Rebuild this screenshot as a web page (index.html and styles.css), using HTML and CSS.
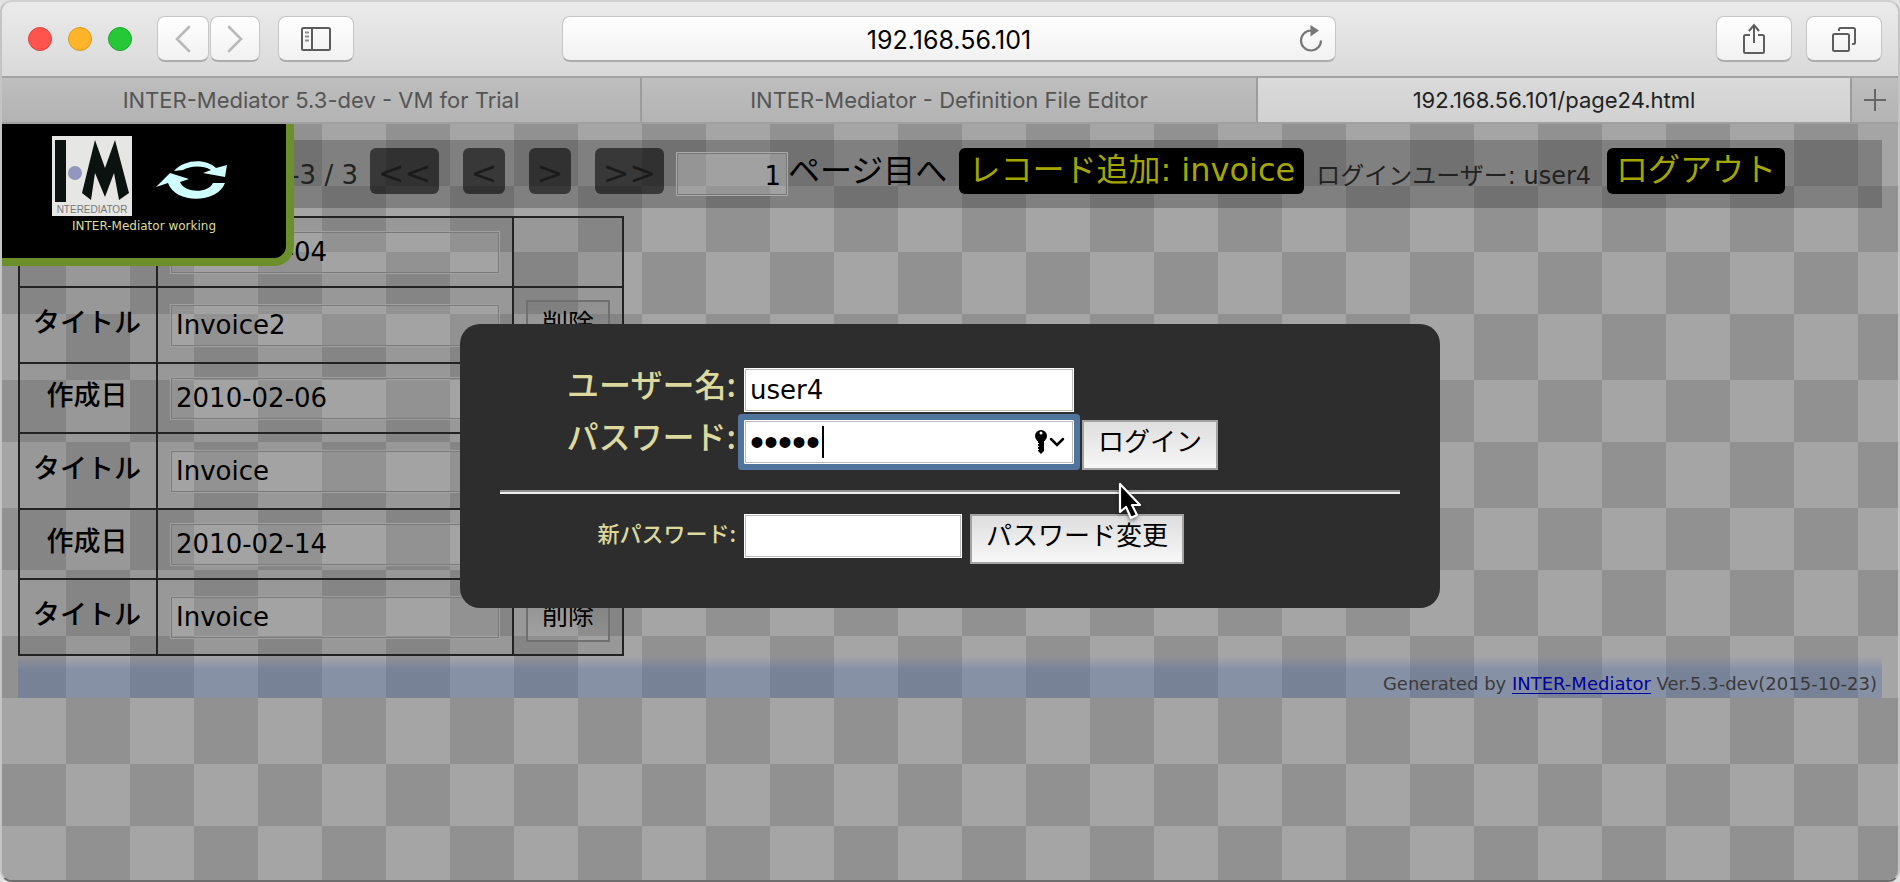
FILE: index.html
```html
<!DOCTYPE html>
<html lang="ja">
<head>
<meta charset="utf-8">
<title>192.168.56.101/page24.html</title>
<link rel="stylesheet" href="styles.css">
</head>
<body>
<div class="window">
  <header class="toolbar">
    <div class="lights"><i class="light red"></i><i class="light yellow"></i><i class="light green"></i></div>
    <div class="history">
      <button class="tool back" aria-label="Back"><svg width="16" height="30" viewBox="0 0 16 30"><path d="M14 3 2 15l12 12" fill="none" stroke="#b9b9b9" stroke-width="2.6" stroke-linecap="round"/></svg></button>
      <button class="tool forward" aria-label="Forward"><svg width="16" height="30" viewBox="0 0 16 30"><path d="M2 3l12 12L2 27" fill="none" stroke="#b9b9b9" stroke-width="2.6" stroke-linecap="round"/></svg></button>
    </div>
    <button class="tool wide" aria-label="Sidebar"><svg width="30" height="24" viewBox="0 0 30 24"><rect x="1" y="1" width="28" height="22" rx="1.5" fill="none" stroke="#5c5c5c" stroke-width="2"/><path d="M11 1v22" stroke="#5c5c5c" stroke-width="2"/><path d="M4 5.500h4M4 9.500h4M4 13.500h4" stroke="#8d8d8d" stroke-width="2"/></svg></button>
    <div class="address">
      <input class="address-input" type="text" value="192.168.56.101" aria-label="Address">
      <button class="reload" aria-label="Reload"><svg width="24" height="28" viewBox="0 0 24 28"><path d="M12 5.500A10 10 0 1 0 22 15.500" fill="none" stroke="#777" stroke-width="2.200"/><path d="M11.500 0 20 5.500l-8.500 6z" fill="#777"/></svg></button>
    </div>
    <div class="actions">
      <button class="tool wide" aria-label="Share"><svg width="24" height="32" viewBox="0 0 24 32"><path d="M8 12H3.500A1.500 1.500 0 0 0 2 13.500v15A1.500 1.500 0 0 0 3.500 30h17a1.500 1.500 0 0 0 1.500-1.500v-15a1.500 1.500 0 0 0-1.500-1.500H16M12 20V2M7 8l5-6 5 6" fill="none" stroke="#5e5e5e" stroke-width="2"/></svg></button>
      <button class="tool wide" aria-label="Show tabs"><svg width="26" height="26" viewBox="0 0 26 26"><rect x="2" y="8" width="16" height="17" rx="1.500" fill="none" stroke="#5e5e5e" stroke-width="2"/><path d="M8 5V3.500A1.500 1.500 0 0 1 9.500 2h13A1.500 1.500 0 0 1 24 3.500v13a1.500 1.500 0 0 1-1.500 1.500H21" fill="none" stroke="#5e5e5e" stroke-width="2"/></svg></button>
    </div>
  </header>
  <nav class="tabs">
    <button class="tab">INTER-Mediator 5.3-dev - VM for Trial</button>
    <button class="tab second">INTER-Mediator - Definition File Editor</button>
    <button class="tab third active">192.168.56.101/page24.html</button>
    <button class="new-tab" aria-label="New tab"><svg width="22" height="22" viewBox="0 0 22 22"><path d="M11 0v22M0 11h22" stroke="#666" stroke-width="2"/></svg></button>
  </nav>
  <main class="page">
    <div class="navigator">
      <span class="position">-3 / 3</span>
      <button class="nav-button double">&lt;&lt;</button>
      <button class="nav-button">&lt;</button>
      <button class="nav-button">&gt;</button>
      <button class="nav-button double">&gt;&gt;</button>
      <label class="jump"><input class="jump-input" type="text" value="1">ページ目へ</label>
      <button class="command">レコード追加: invoice</button>
      <span class="user">ログインユーザー: user4</span>
      <button class="command logout">ログアウト</button>
    </div>
    <table class="records">
      <tr class="short"><th></th><td><input class="field" type="text" value="2010-02-04" aria-label="作成日"></td><td></td></tr>
      <tr><th><label for="t1">タイトル</label></th><td><input class="field" id="t1" type="text" value="Invoice2"></td><td><button class="delete">削除</button></td></tr>
      <tr class="short"><th><label for="d2">作成日</label></th><td><input class="field" id="d2" type="text" value="2010-02-06"></td><td></td></tr>
      <tr><th><label for="t2">タイトル</label></th><td><input class="field" id="t2" type="text" value="Invoice"></td><td></td></tr>
      <tr class="short"><th><label for="d3">作成日</label></th><td><input class="field" id="d3" type="text" value="2010-02-14"></td><td></td></tr>
      <tr><th><label for="t3">タイトル</label></th><td><input class="field" id="t3" type="text" value="Invoice"></td><td><button class="delete">削除</button></td></tr>
    </table>
    <footer class="credit">Generated by <a href="#">INTER-Mediator</a> Ver.5.3-dev(2015-10-23)</footer>

    <aside class="working">
      <div class="working-icons">
        <svg width="80" height="80" viewBox="0 0 80 80"><rect width="80" height="80" fill="#e6e6e4"/><rect x="3" y="4" width="11" height="62" fill="#0b1210"/><circle cx="23" cy="37" r="7" fill="#9297c0"/><path d="M43 4 53 32 63 4 77 57 67 64 62 37 53 61 43 37 39 64 30 57z" fill="#0b1210"/><text x="40" y="77" text-anchor="middle" class="logo-text">NTEREDIATOR</text></svg>
        <svg width="72" height="40" viewBox="0 0 72 40"><g fill="#d0ffff"><path d="M18 11C28-1 50-2 60 8l11-3-2 12-22-4 8-3C46 5 34 6 27 10z"/><path d="M0 27 14 13l19 6-9 3c4 11 28 12 33 1h12C62 43 20 45 12 23z"/></g></svg>
      </div>
      <p class="working-text">INTER-Mediator working</p>
    </aside>

    <div class="backdrop">
      <form class="dialog">
        <div class="row">
          <label class="caption" for="user">ユーザー名:</label>
          <input class="entry" id="user" type="text" value="user4">
        </div>
        <div class="row">
          <label class="caption" for="password">パスワード:</label>
          <div class="password">
            <input class="entry focused" id="password" type="password" value="abcde">
            <span class="caret"></span>
            <svg class="key" width="32" height="26" viewBox="0 0 32 26"><circle cx="7" cy="7" r="6" fill="#000"/><circle cx="7" cy="4" r="1.500" fill="#fff"/><path d="M4 11h6v11l-3 3-3-3z" fill="#000"/><path d="M4 14.500h1M4 17.500h1M4 20.500h1" stroke="#fff"/><path d="m17 10 6 6 6-6" fill="none" stroke="#000" stroke-width="2.500" stroke-linecap="round"/></svg>
          </div>
          <button class="push" type="button">ログイン</button>
        </div>
        <hr class="rule">
        <div class="row">
          <label class="caption small" for="newpass">新パスワード:</label>
          <input class="entry narrow" id="newpass" type="password">
          <button class="push" type="button">パスワード変更</button>
        </div>
        <svg class="pointer" width="28" height="42" viewBox="0 0 28 42"><path d="M3 2v28l6-5 5 11 6-3-5-10h8z" fill="#000" stroke="#fff" stroke-width="2.200" stroke-linejoin="round"/></svg>
      </form>
    </div>
  </main>
</div>
</body>
</html>
```
FILE: styles.css
```css
* { box-sizing: border-box; }
body { margin: 0; background: #e2e2e2; font-family: "DejaVu Sans", "Noto Sans CJK JP", sans-serif; color: #000; }
button, input { font: inherit; color: inherit; margin: 0; border: 0; padding: 0; }
svg { display: block; flex: none; }

/* Browser window */
.window { display: flex; flex-direction: column; min-height: 100vh; border: 2px solid #c4c4c4; border-top-color: #d0d0d0; border-bottom-color: #6e6e6e; border-radius: 12px; overflow: hidden; }

.toolbar { display: flex; align-items: center; height: 76px; padding: 0 16px 0 26px; border-bottom: 2px solid #a3a3a3; background: linear-gradient(#ebebeb, #d9d9d9); font-family: Inter, "Liberation Sans", sans-serif; }
.lights { display: flex; gap: 16px; margin-right: 25px; }
.light { width: 24px; height: 24px; border-radius: 50%; border: 1px solid; }
.red { background: #ff544d; border-color: #e2443e; }
.yellow { background: #ffb429; border-color: #dd9a1c; }
.green { background: #26c838; border-color: #1aa82a; }
.tool, .address { height: 46px; border: 1px solid #c6c6c6; border-bottom: 2px solid #acacac; border-radius: 8px; background: linear-gradient(#fff, #f1f1f1); }
.tool { display: flex; align-items: center; justify-content: center; width: 76px; }
.history { display: flex; gap: 1px; margin-right: 18px; }
.history .back { width: 52px; }
.history .forward { width: 50px; }
.address { display: flex; align-items: center; position: relative; flex: 0 1 774px; margin: 0 auto 0 208px; }
.address-input { width: 100%; padding-top: 2px; background: none; text-align: center; font-size: 25px; line-height: 32px; }
.reload { position: absolute; right: 12px; background: none; }
.actions { display: flex; gap: 14px; }

.tabs { display: flex; height: 46px; border-bottom: 2px solid #a0a0a0; background: linear-gradient(#bebebe, #b3b3b3); font-family: Inter, "Liberation Sans", sans-serif; font-size: 22px; }
.tab { flex: 640 1 0; min-width: 0; border-right: 2px solid #9c9c9c; background: none; color: #555; white-space: nowrap; }
.second { flex-grow: 616; }
.third { flex-grow: 594; }
.active { background: linear-gradient(#dadada, #d1d1d1); color: #222; }
.new-tab { display: flex; align-items: center; justify-content: center; width: 46px; background: none; }

/* Checkered page: column stripes, and the inverse stripes on every other row */
.page { position: relative; flex: 1; padding: 16px; font-size: 26px; background: repeating-linear-gradient(90deg, #919191 0 64px, #a5a5a5 64px 128px); }
.page::before {
  content: ""; position: absolute; inset: 0;
  background: repeating-linear-gradient(90deg, #a5a5a5 0 64px, #919191 64px 128px);
  mask: repeating-linear-gradient(transparent 0 62px, #000 62px 128px);
}
.navigator, .records, .credit { position: relative; }

.navigator { display: flex; align-items: center; height: 68px; padding-bottom: 6px; background: rgba(0, 0, 0, .22); white-space: nowrap; }
.position { width: 340px; margin-right: 12px; padding-top: 8px; text-align: right; color: #222; }
.nav-button { width: 42px; height: 46px; margin-right: 24px; padding-top: 4px; border-radius: 6px; background: rgba(0, 0, 0, .56); color: #1b1b1b; font-size: 32px; line-height: 42px; }
.double { width: 69px; }
.double + .jump { margin-left: -12px; }
.jump { display: flex; align-items: center; font-size: 32px; line-height: 46px; margin-right: 12px; }
.jump-input { width: 112px; height: 44px; margin-top: 6px; padding: 4px 6px 0; border: 1px solid #aaa; outline: 1px solid #777; outline-offset: -2px; background: rgba(255, 255, 255, .26); text-align: right; font-size: 26px; }
.command { height: 46px; padding: 0 9px 2px; border-radius: 6px; background: #000; color: #a5a500; font-size: 32px; line-height: 42px; }
.user { margin: 4px 16px 0 12px; font-size: 24px; color: #222; }

.records { border-collapse: collapse; margin-top: 8px; table-layout: fixed; width: 606px; }
.records tr { height: 76px; }
.records .short { height: 70px; }
.records th, .records td { border: 2px solid #222; padding: 0 12px; background: rgba(0, 0, 0, .08); }
.records th { width: 138px; padding: 0 2px 8px 0; font-size: 27px; line-height: 40px; font-weight: 500; font-family: "Noto Sans CJK JP", sans-serif; }
.records td:nth-child(2) { width: 356px; }
.field { display: block; width: 100%; height: 43px; padding: 0 5px; border: 1px solid #a0a0a0; outline: 1px solid #7a7a7a; outline-offset: -2px; background: rgba(255, 255, 255, .11); }
.delete { display: block; width: 84px; height: 50px; padding-bottom: 8px; border: 2px solid #707070; background: linear-gradient(rgba(0, 0, 0, .06), rgba(255, 255, 255, .1)); }

.credit { height: 42px; padding: 16px 5px 0; text-align: right; font-size: 18px; line-height: 24px; color: #3a3a3a; background: linear-gradient(rgba(54, 91, 169, 0), rgba(54, 91, 169, .27) 14px); }
.credit a { color: #00009c; text-underline-offset: 3px; }

/* Progress panel */
.working { position: absolute; top: 0; left: 0; width: 292px; height: 142px; padding-top: 12px; border-right: 8px solid #6b8f2b; border-bottom: 8px solid #6b8f2b; border-radius: 0 0 20px 0; background: #000; }
.working-icons { display: flex; gap: 24px; align-items: center; padding-left: 50px; }
.working-icons svg + svg { margin-top: 8px; }
.logo-text { font: 10px "Liberation Sans", sans-serif; fill: #777; }
.working-text { margin: 2px 0 0; text-align: center; font-size: 12px; line-height: 16px; color: #dcdc9e; }

/* Login dialog */
.backdrop { position: absolute; inset: 0; padding-top: 200px; }
.dialog { position: relative; width: 980px; max-width: 100%; margin: 0 auto; padding: 44px 40px 42px; border-radius: 20px; background: #2d2d2d; }
.row { display: flex; align-items: flex-start; height: 52px; }
.caption { width: 236px; margin-right: 8px; text-align: right; font-size: 32px; line-height: 30px; font-weight: 500; color: #dcd89e; white-space: nowrap; font-family: "Noto Sans CJK JP", sans-serif; }
.small { font-size: 22px; line-height: 36px; }
.entry { width: 330px; height: 44px; padding: 0 5px; border: 1px solid #fff; outline: 1px solid #bbb; outline-offset: -2px; background: #fff; }
.narrow { width: 218px; }
.password { position: relative; }
.focused { display: block; box-shadow: 0 0 0 6px #50749b; border-radius: 1px; font-family: "Liberation Sans", sans-serif; font-size: 40px; }
.caret { position: absolute; left: 78px; top: 6px; width: 2px; height: 32px; background: #000; }
.key { position: absolute; right: 8px; top: 9px; }
.push { height: 50px; margin-left: 8px; padding: 0 14px 6px; border: 2px solid #a3a3a3; background: linear-gradient(#dedede, #f7f7f7); line-height: 40px; }
.rule { height: 4px; margin: 18px 0 20px; border: 0; border-top: 2px solid #8f8f8f; background: #eee; }
.pointer { position: absolute; left: 657px; top: 158px; filter: drop-shadow(0 2px 2px rgba(0, 0, 0, .5)); }
```
